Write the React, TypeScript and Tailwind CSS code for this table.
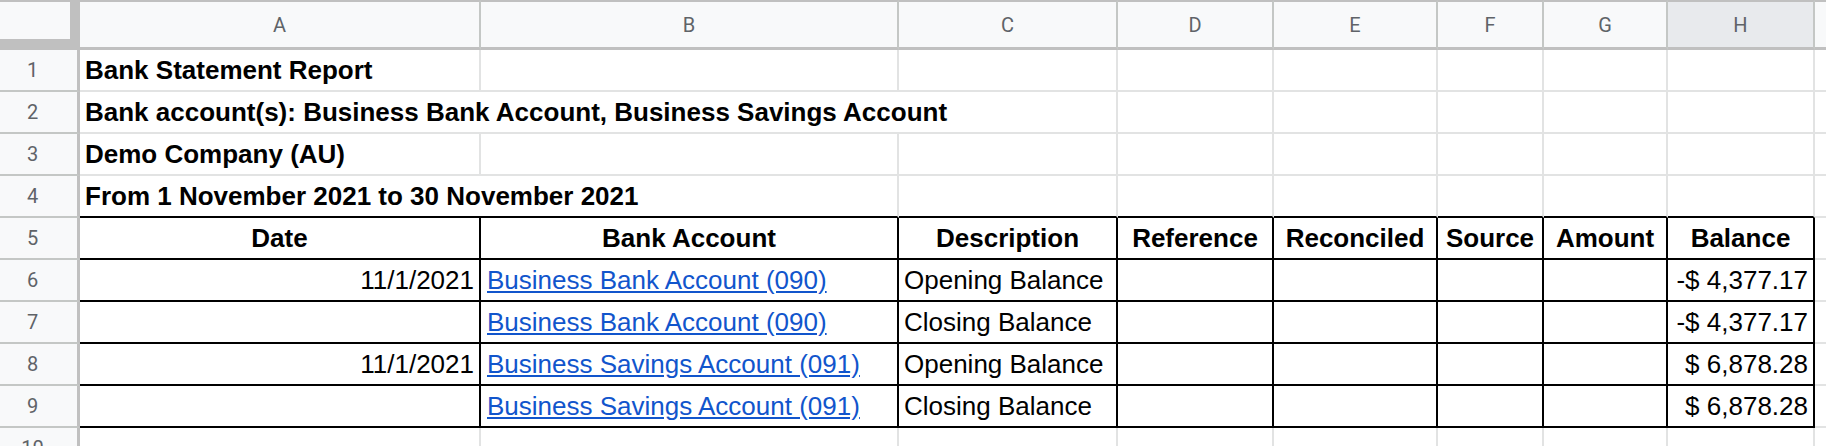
import clsx from 'clsx'

// column header letters, H is the highlighted one
const letters = ['A', 'B', 'C', 'D', 'E', 'F', 'G', 'H']

const gridLine = 'border-r-2 border-b-2 border-[#e2e3e3]'
const blackLine = 'border-r-2 border-b-2 border-black'
const bodyText = 'flex items-center px-[5px] whitespace-nowrap'

function RowHead({ n }: { n: number }) {
  return (
    <div className="flex items-center justify-center pr-[12px] bg-[#f8f9fa] border-r-[3px] border-r-[#c0c0c0] border-b-2 border-b-[#c4c7c5] font-['Roboto',Arial,sans-serif] text-[20px] text-[#5f6368]">
      {n}
    </div>
  )
}

function Empty({ count, black }: { count: number; black?: boolean }) {
  return (
    <>
      {Array.from({ length: count }).map((_, i) => (
        <div key={i} className={black ? blackLine : gridLine} />
      ))}
    </>
  )
}

const headings = ['Date', 'Bank Account', 'Description', 'Reference', 'Reconciled', 'Source', 'Amount', 'Balance']

const entries = [
  { date: '11/1/2021', account: 'Business Bank Account (090)', desc: 'Opening Balance', balance: '-$ 4,377.17' },
  { date: '', account: 'Business Bank Account (090)', desc: 'Closing Balance', balance: '-$ 4,377.17' },
  { date: '11/1/2021', account: 'Business Savings Account (091)', desc: 'Opening Balance', balance: '$ 6,878.28' },
  { date: '', account: 'Business Savings Account (091)', desc: 'Closing Balance', balance: '$ 6,878.28' },
]

export default function App() {
  return (
    <div className="h-[446px] w-[1826px] overflow-hidden bg-white">
      <div className="grid grid-cols-[80px_401px_418px_219px_156px_164px_106px_124px_147px_200px] grid-rows-[50px_repeat(10,42px)] font-['Liberation_Sans',Arial,sans-serif] text-[26px] text-black">
        {/* header row */}
        <div className="bg-[#f8f9fa] border-t-2 border-r-[10px] border-b-[11px] border-[#c0c0c0]" />
        {letters.map((l) => (
          <div
            key={l}
            className={clsx(
              "flex items-center justify-center border-t-2 border-t-[#c0c0c0] border-r-2 border-r-[#c4c7c5] border-b-[3px] border-b-[#c0c0c0] font-['Roboto',Arial,sans-serif] text-[20px] text-[#5f6368]",
              l === 'H' ? 'bg-[#e8eaed]' : 'bg-[#f8f9fa]'
            )}
          >
            {l}
          </div>
        ))}
        <div className="bg-[#f8f9fa] border-t-2 border-t-[#c0c0c0] border-b-[3px] border-b-[#c0c0c0]" />

        {/* 1 */}
        <RowHead n={1} />
        <div className={clsx(gridLine, bodyText, 'font-bold')}>Bank Statement Report</div>
        <Empty count={8} />

        {/* 2 */}
        <RowHead n={2} />
        <div className={clsx(gridLine, bodyText, 'col-span-3 font-bold')}>
          Bank account(s): Business Bank Account, Business Savings Account
        </div>
        <Empty count={6} />

        {/* 3 */}
        <RowHead n={3} />
        <div className={clsx(gridLine, bodyText, 'font-bold')}>Demo Company (AU)</div>
        <Empty count={8} />

        {/* 4 */}
        <RowHead n={4} />
        <div className={clsx(gridLine, bodyText, 'col-span-2 font-bold border-b-black')}>
          From 1 November 2021 to 30 November 2021
        </div>
        {Array.from({ length: 6 }).map((_, i) => (
          <div key={i} className={clsx(gridLine, 'border-b-black')} />
        ))}
        <div className={gridLine} />

        {/* 5 - table headings */}
        <RowHead n={5} />
        {headings.map((h) => (
          <div key={h} className={clsx(blackLine, bodyText, 'justify-center font-bold')}>
            {h}
          </div>
        ))}
        <div className={gridLine} />

        {/* 6-9 */}
        {entries.map((e, i) => (
          <div key={i} className="contents">
            <RowHead n={6 + i} />
            <div className={clsx(blackLine, bodyText, 'justify-end')}>{e.date}</div>
            <div className={clsx(blackLine, bodyText, 'pl-[6px]')}>
              <a href="#" className="text-[#1155cc] underline">
                {e.account}
              </a>
            </div>
            <div className={clsx(blackLine, bodyText)}>{e.desc}</div>
            <Empty count={4} black />
            <div className={clsx(blackLine, bodyText, 'justify-end')}>{e.balance}</div>
            <div className={gridLine} />
          </div>
        ))}

        {/* 10 */}
        <RowHead n={10} />
        <Empty count={9} />
      </div>
    </div>
  )
}
